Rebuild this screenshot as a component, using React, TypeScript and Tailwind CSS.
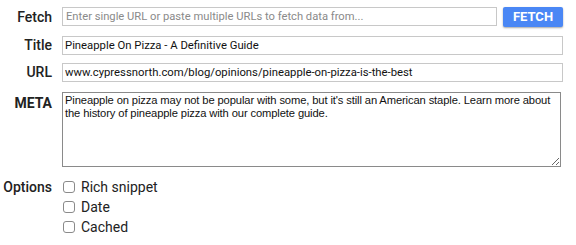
import React from "react";

const Row = ({ label, className = "", labelClass = "", children }: { label: string; className?: string; labelClass?: string; children: React.ReactNode }) => (
  <div className={`flex ${className}`}>
    <div className={`w-[52px] shrink-0 text-right text-[#222] ${labelClass}`}>{label}</div>
    <div className="ml-[10px] flex-1">{children}</div>
  </div>
);

const Check = ({ label }: { label: string }) => (
  <label className="flex h-[20px] items-center">
    <span className="ml-[1px] h-[12px] w-[12px] rounded-[3px] border border-[#8a8a8a] bg-white" />
    <span className="ml-[6px] text-[14px] text-[#222]" style={{ fontFamily: "Roboto, sans-serif" }}>{label}</span>
  </label>
);

export default function App() {
  const roboto = { fontFamily: "Roboto, 'Liberation Sans', sans-serif" };
  return (
    <div className="h-[245px] w-[576px] bg-white pr-[13px] pt-[7px]" style={roboto}>
      <Row label="Fetch" labelClass="text-[14px] font-medium leading-[20px]">
        <div className="flex items-start">
          <input
            className="h-[19px] flex-1 border border-[#c8c8c8] px-[3px] text-[11.2px] text-[#222] outline-none placeholder:text-[#8a8a8a]"
            style={roboto}
            placeholder="Enter single URL or paste multiple URLs to fetch data from..."
          />
          <button
            className="ml-[6px] h-[20px] w-[60px] rounded-[2px] bg-[#4a87f5] text-[13px] font-bold text-white shadow-[0_1px_2px_rgba(0,0,0,0.35)]"
            style={roboto}
          >
            FETCH
          </button>
        </div>
      </Row>
      <Row label="Title" className="mt-[9px]" labelClass="text-[14px] font-medium leading-[19px]">
        <input
          readOnly
          className="block h-[19px] w-full border border-[#c8c8c8] px-[2px] text-[11.3px] text-[#111] outline-none"
          style={roboto}
          value="Pineapple On Pizza - A Definitive Guide"
        />
      </Row>
      <Row label="URL" className="mt-[8px]" labelClass="text-[14px] font-medium leading-[19px]">
        <input
          readOnly
          className="block h-[19px] w-full border border-[#c8c8c8] px-[2px] text-[11.3px] text-[#111] outline-none"
          style={roboto}
          value="www.cypressnorth.com/blog/opinions/pineapple-on-pizza-is-the-best"
        />
      </Row>
      <Row label="META" className="mt-[10px]" labelClass="text-[14px] font-bold leading-[20px] pt-[1px]" >
        <textarea
          readOnly
          className="block h-[75px] w-[499px] border border-[#8a8a8a] px-[2px] py-[1px] text-[11.2px] leading-[13px] tracking-[-0.12px] text-[#111] outline-none"
          style={{ fontFamily: "'Liberation Sans', Arial, sans-serif", resize: "both" }}
          value="Pineapple on pizza may not be popular with some, but it's still an American staple. Learn more about the history of pineapple pizza with our complete guide."
        />
      </Row>
      <div className="mt-[10px] flex">
        <div className="w-[52px] shrink-0 pt-[1px] text-right text-[14px] font-medium leading-[18px] text-[#222]">Options</div>
        <div className="ml-[10px] flex flex-col">
          <Check label="Rich snippet" />
          <Check label="Date" />
          <Check label="Cached" />
        </div>
      </div>
    </div>
  );
}
